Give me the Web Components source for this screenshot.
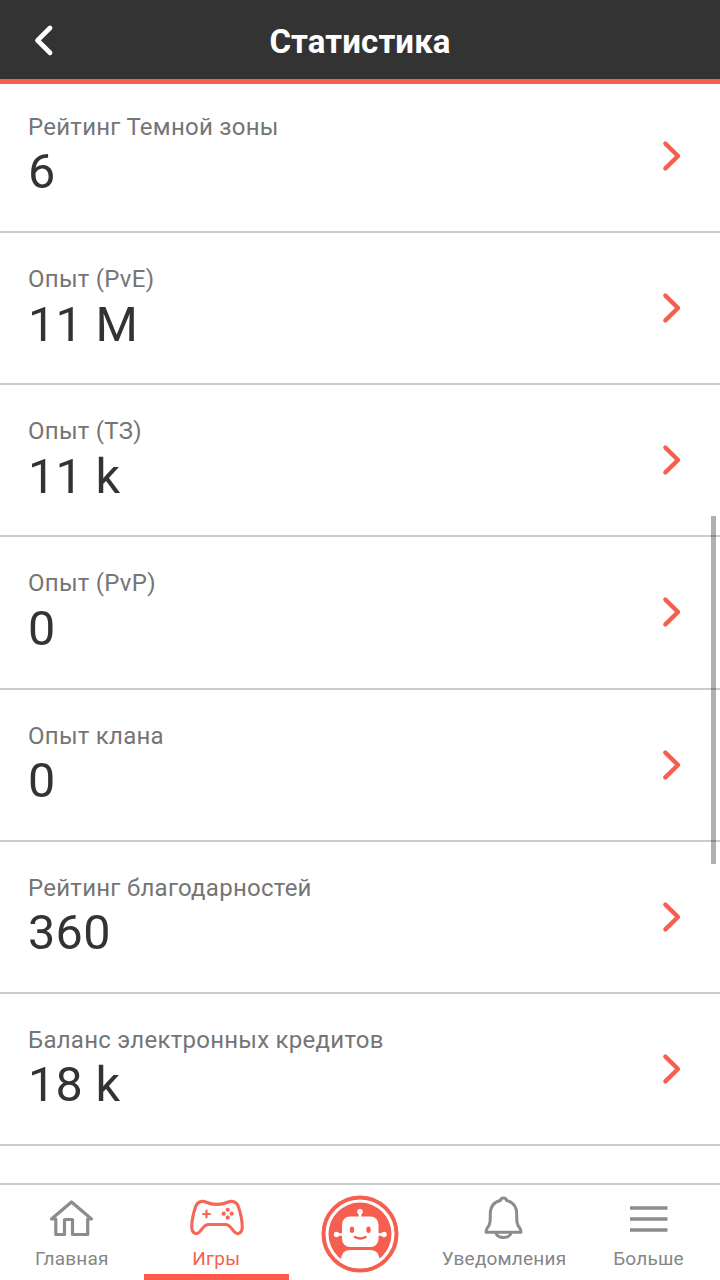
<!DOCTYPE html>
<html lang="ru">
<head>
<meta charset="utf-8">
<title>Статистика</title>
<style>
html,body{margin:0;height:100%;overflow:hidden;background:#fff;font-family:Roboto,"Noto Sans",sans-serif}
</style>
</head>
<body>
<stats-screen></stats-screen>
<script>
const define = (name, html, setup) => customElements.define(name, class extends HTMLElement {
  connectedCallback() {
    if (this.shadowRoot) return;
    const t = document.createElement('template');
    t.innerHTML = html;
    this.attachShadow({ mode: 'open' }).appendChild(t.content.cloneNode(true));
    if (setup) setup(this, this.shadowRoot);
  }
});

define('app-header', `
<style>
:host{display:grid;grid-template-columns:88px 1fr 88px;align-items:center;height:84px;box-sizing:border-box;border-bottom:5px solid #f65f50;background:#333;color:#fff}
svg{display:block;width:88px;height:79px}
h1{margin:0;padding-top:4px;text-align:center;font-size:33px;line-height:40px;font-weight:700;letter-spacing:.12px}
</style>
<svg viewBox="0 0 88 79"><path d="M50 28 37.5 40.4 50 52.8" fill="none" stroke="#fff" stroke-width="4.8" stroke-linecap="round" stroke-linejoin="round"/></svg>
<h1><slot></slot></h1>`);

define('stat-row', `
<style>
:host{display:flex;justify-content:space-between;height:152.2px;box-sizing:border-box;border-bottom:2px solid #ccc;padding:32px 38px 0 28px}
.label{font-size:24px;line-height:28px;color:#757575;letter-spacing:.26px}
.value{font-size:48.5px;line-height:56px;color:#333;margin-top:3.5px;letter-spacing:.35px}
svg{width:20px;height:32px;margin-top:27px}
</style>
<div><div class="label"><slot name="label"></slot></div><div class="value"><slot></slot></div></div>
<svg viewBox="0 0 20 32"><path d="M3.4 3.6 16 16 3.4 28.4" fill="none" stroke="#f65f50" stroke-width="4.4" stroke-linecap="round" stroke-linejoin="round"/></svg>`);

const icons = {
  home: `<path d="M23.5 3 43.5 20H39.7V35.5H24.5V20.5H16.5V35.5H7.8V20H3.5Z" stroke-width="3.2"/>`,
  pad: `<path d="M17 3.5C22 6 32 6 37 3.5C43 .8 47 3.4 48.5 8C51 15.500 52.500 22 52.200 29C52 34.500 47.500 36 44.500 33C41.500 30 40 25.500 35.500 25.500H18.500C14 25.500 12.500 30 9.500 33C6.500 36 2 34.500 1.800 29C1.500 22 3 15.500 5.500 8C7 3.400 11 .8 17 3.500Z" stroke-width="3.1"/><path d="M16.500 10.800V19.200M12.300 15H20.700" stroke-width="2.200"/><g fill="currentColor" stroke="none"><circle cx="37.700" cy="10.800" r="2.100"/><circle cx="37.700" cy="18.700" r="2.100"/><circle cx="33.700" cy="14.700" r="2.100"/><circle cx="41.700" cy="14.700" r="2.100"/></g>`,
  bell: `<path d="M17.400 4.500C18 1.200 23 1.200 23.600 4.500C30 6 33.700 11 33.700 18C33.700 25 33.700 28.500 36.500 31.700C37.500 33 38 34 38 36.300H3C3 34 3.500 33 4.500 31.700C7.300 28.500 7.300 25 7.300 18C7.300 11 11 6 17.400 4.500Z" stroke-width="3"/><path d="M12.800 37C15 43 26 43 28.200 37" stroke-width="3"/>`,
  menu: `<path d="M0 3H37.500M0 14H37.500M0 25H37.500" stroke-width="3.600"/>`
};
const boxes = { home: [47, 38, 14, 0], pad: [54, 37, 14, 1], bell: [41, 43, 11, -1], menu: [37, 28, 20, 0] };

define('nav-item', `
<style>
:host{display:flex;flex-direction:column;align-items:center;justify-content:space-between;height:95px;box-sizing:border-box;color:#868686;border-bottom:6px solid transparent}
:host([active]){color:#f65f50;border-bottom-color:#ff5a49}
svg{display:block;overflow:visible;opacity:.95}
span{font-size:19px;line-height:24px;white-space:nowrap;margin-bottom:3.5px;letter-spacing:.2px}
</style>
<svg fill="none" stroke="currentColor" stroke-linejoin="round"></svg><span><slot></slot></span>`, (host, root) => {
  const kind = host.getAttribute('icon'), [w, h, top, shift] = boxes[kind], svg = root.querySelector('svg');
  svg.setAttribute('width', w); svg.setAttribute('height', h);
  svg.style.margin = `${top}px 0 0 ${shift}px`;
  svg.innerHTML = icons[kind];
});

define('robot-button', `
<style>:host{display:flex;justify-content:center;padding-top:10px}svg{display:block}</style>
<svg width="78" height="78" viewBox="0 0 78 78">
<circle cx="39" cy="39" r="36.500" fill="#fff" stroke="#f65f50" stroke-width="4"/>
<circle cx="39" cy="39" r="31.500" fill="#f65f50"/>
<path d="M20 65.500Q20 55 29 55H49.500Q58.500 55 58.500 65.500A33 33 0 0 1 20 65.500Z" fill="#fff"/>
<rect x="21" y="21.500" width="36.500" height="30.500" rx="8" fill="#fff"/>
<path d="M39 23V17M21 39.500H15M57 39.500H63" stroke="#fff" stroke-width="2.600"/>
<g fill="#fff"><circle cx="39" cy="16.700" r="2.800"/><circle cx="15.500" cy="39.500" r="2.700"/><circle cx="63" cy="39.500" r="2.700"/></g>
<g fill="#f65f50"><ellipse cx="31" cy="34.700" rx="2.200" ry="3.300"/><ellipse cx="47.500" cy="34.700" rx="2.200" ry="3.300"/></g>
<path d="M34 42Q39.200 45.200 44.500 42" fill="none" stroke="#f65f50" stroke-width="2.500" stroke-linecap="round"/>
</svg>`);

define('tab-bar', `
<style>:host{display:grid;grid-template-columns:143.500px 145.500px 142px 146px 143px;height:97px;box-sizing:border-box;border-top:2px solid #ccc;background:#fff}</style><slot></slot>`);

define('scroll-thumb', `
<style>:host{display:block;position:absolute;left:711px;top:516px;width:5px;height:348px;background:rgba(0,0,0,.31)}</style>`);

define('stats-screen', `
<style>
:host{display:flex;flex-direction:column;height:1280px;width:720px;position:relative}
main{flex:1;min-height:0;overflow:hidden}
main>:first-child{margin-top:-3.200px}
</style>
<app-header>Статистика</app-header>
<main></main>
<tab-bar>
<nav-item icon="home">Главная</nav-item>
<nav-item icon="pad" active>Игры</nav-item>
<robot-button></robot-button>
<nav-item icon="bell">Уведомления</nav-item>
<nav-item icon="menu">Больше</nav-item>
</tab-bar>
<scroll-thumb></scroll-thumb>`, (host, root) => {
  root.querySelector('main').innerHTML = [
    ['Рейтинг Темной зоны', '6'], ['Опыт (PvE)', '11 M'], ['Опыт (ТЗ)', '11 k'], ['Опыт (PvP)', '0'],
    ['Опыт клана', '0'], ['Рейтинг благодарностей', '360'], ['Баланс электронных кредитов', '18 k']
  ].map(([l, v]) => `<stat-row><span slot="label">${l}</span>${v}</stat-row>`).join('');
});
</script>
</body>
</html>
